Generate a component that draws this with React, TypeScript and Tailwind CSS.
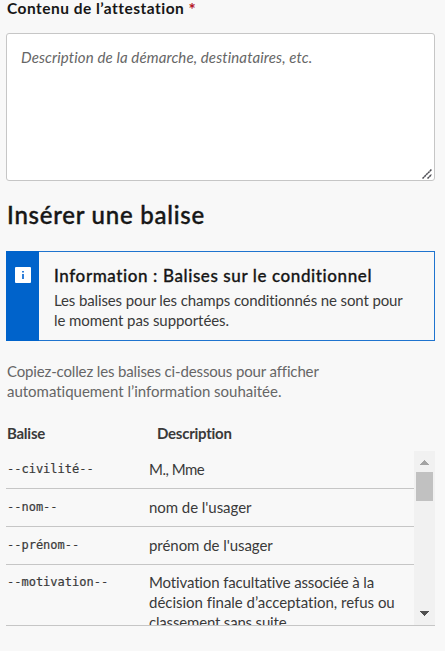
const tags = [
  { tag: "--civilité--", lines: [{ text: "M., Mme", spacing: "tracking-[-0.5px]" }] },
  { tag: "--nom--", lines: [{ text: "nom de l'usager", spacing: "tracking-[-0.05px]" }] },
  { tag: "--prénom--", lines: [{ text: "prénom de l'usager", spacing: "tracking-[-0.05px]" }] },
  {
    tag: "--motivation--",
    lines: [
      { text: "Motivation facultative associée à la", spacing: "tracking-[-0.14px]" },
      { text: "décision finale d’acceptation, refus ou", spacing: "tracking-[-0.02px]" },
      { text: "classement sans suite", spacing: "tracking-[-0.18px]" },
    ],
  },
];

function ResizeGrip() {
  return (
    <svg className="absolute right-[2px] bottom-[1px] h-[10px] w-[10px]" viewBox="0 0 10 10" fill="none" stroke="#4c4c52" strokeWidth="1.5">
      <path d="M0.5 9.5 L9.5 0.5 M5.5 9.5 L9.5 5.5" strokeDasharray="2.2 0.4" />
    </svg>
  );
}

function Scrollbar() {
  return (
    <div className="flex w-[21px] shrink-0 flex-col items-center bg-[#f1f1f1]">
      <svg className="h-[21px] w-[21px] shrink-0" viewBox="0 0 21 21" shapeRendering="crispEdges">
        <path d="M6 14 L10.5 9 L15 14 Z" fill="#a3a3a3" />
      </svg>
      <div className="h-[29px] w-[17px] bg-[#c1c1c1]" />
      <svg className="mt-auto h-[21px] w-[21px] shrink-0" viewBox="0 0 21 21" shapeRendering="crispEdges">
        <path d="M6 7 L15 7 L10.5 12 Z" fill="#505050" />
      </svg>
    </div>
  );
}

export default function App() {
  return (
    <main className="h-[651px] w-[445px] overflow-hidden bg-[#f8f8f8] pr-[10px] pl-[6px] font-['Lato',sans-serif] text-[15px] leading-5 text-[#3a3a3a] [font-variant-ligatures:none]">
      <label className="block h-[33px] pl-[1px] text-[15.5px] leading-[17px] font-bold tracking-[0.48px] whitespace-nowrap text-[#161616]">
        Contenu de l’attestation <span className="inline-block h-[10px] align-[-2px] text-[17px] leading-[12px] text-[#b3131f]">*</span>
      </label>

      <div className="relative h-[148px] rounded-[3px] border border-[#c6c6c6] bg-white pt-[13px] pl-[14px]">
        <p className="tracking-[0.12px] whitespace-nowrap text-[#666] italic">Description de la démarche, destinataires, etc.</p>
        <ResizeGrip />
      </div>

      <h2 className="mt-[18px] h-[32px] pl-[1px] text-[24px] leading-[32px] font-medium tracking-[0.75px] whitespace-nowrap text-[#161616] [-webkit-text-stroke:0.4px_#161616]">Insérer une balise</h2>

      <section className="mt-[20px] flex h-[90px] border border-[#1f74cf]">
        <div className="-my-px -ml-px w-[33px] shrink-0 bg-[#0063cb] pt-[16px] pl-[9px]">
          <svg className="h-4 w-4" viewBox="0 0 16 16">
            <rect width="16" height="16" rx="1" fill="white" />
            <path d="M7 4h2v1.5H7zM7 7h2v5H7z" fill="#2f7fd8" />
          </svg>
        </div>
        <div className="pt-[12px] pl-[15px] whitespace-nowrap">
          <h3 className="text-[17px] leading-6 font-medium tracking-[0.6px] text-[#161616] [-webkit-text-stroke:0.3px_#161616]">Information : Balises sur le conditionnel</h3>
          <p className="mt-[2px] tracking-[-0.12px]">Les balises pour les champs conditionnés ne sont pour</p>
          <p className="tracking-[-0.08px]">le moment pas supportées.</p>
        </div>
      </section>

      <div className="mt-[20px] pl-[1px] whitespace-nowrap text-[#666]">
        <p className="tracking-[-0.14px]">Copiez-collez les balises ci-dessous pour afficher</p>
        <p className="tracking-[-0.02px]">automatiquement l’information souhaitée.</p>
      </div>

      <div className="mt-[22px] flex h-[28px] pl-[1px] font-bold tracking-[-0.25px]">
        <span className="w-[150px]">Balise</span>
        <span>Description</span>
      </div>

      <div className="flex h-[175px] border-b border-[#c6c6c6]">
        <div className="min-w-0 flex-1 overflow-hidden">
          {tags.map(({ tag, lines }, i) => (
            <div key={tag} className={`flex pt-[8px] pl-[1px] ${i < 3 ? "h-[38px] border-b border-[#c6c6c6]" : "-mt-px"}`}>
              <code className="w-[142px] shrink-0 font-['DejaVu_Sans_Mono',monospace] text-[12px] leading-5 [-webkit-text-stroke:0.2px_#3a3a3a]">{tag}</code>
              <div className="whitespace-nowrap">
                {lines.map(({ text, spacing }) => (
                  <p key={text} className={spacing}>{text}</p>
                ))}
              </div>
            </div>
          ))}
        </div>
        <Scrollbar />
      </div>
    </main>
  );
}
